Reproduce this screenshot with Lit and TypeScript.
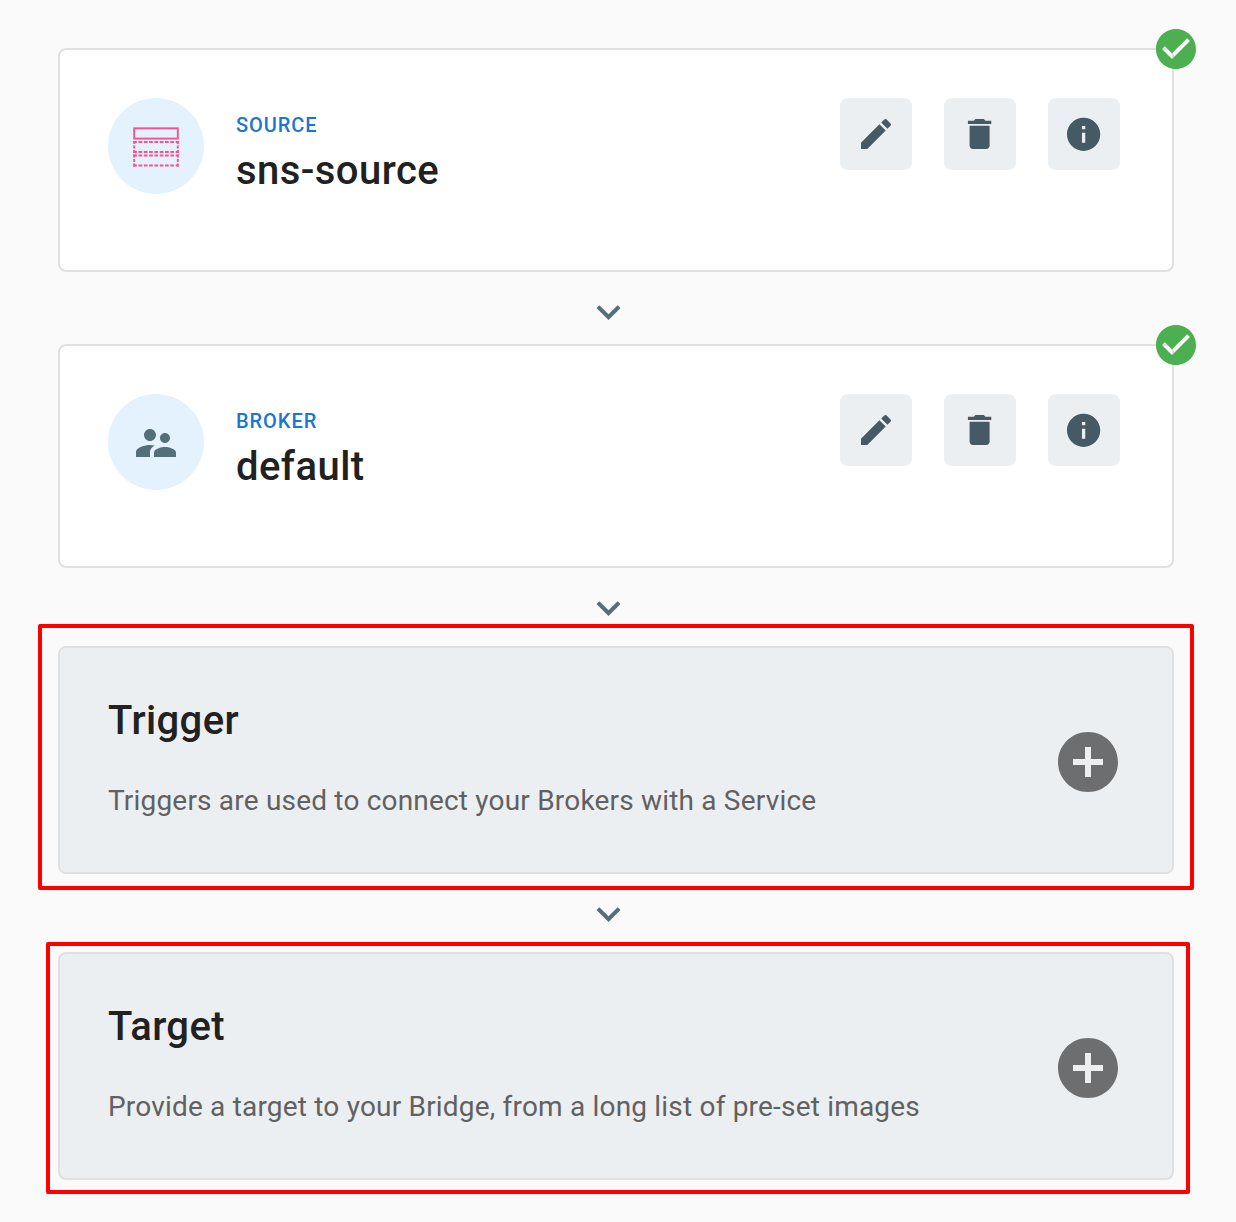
import { LitElement, html, css, svg } from "lit";
import { customElement } from "lit/decorators.js";

const icons = {
  edit: svg`<path d="M3 17.25V21h3.75L17.81 9.94l-3.75-3.75L3 17.25zM20.71 7.04a1 1 0 0 0 0-1.41l-2.34-2.34a1 1 0 0 0-1.41 0l-1.83 1.83 3.75 3.75 1.83-1.83z"/>`,
  trash: svg`<path d="M6 19c0 1.1.9 2 2 2h8c1.1 0 2-.9 2-2V7H6v12zM19 4h-3.5l-1-1h-5l-1 1H5v2h14V4z"/>`,
  info: svg`<path d="M12 2C6.48 2 2 6.48 2 12s4.48 10 10 10 10-4.48 10-10S17.52 2 12 2zm1 15h-2v-6h2v6zm0-8h-2V7h2v2z"/>`,
  check: svg`<path d="M12 2C6.48 2 2 6.48 2 12s4.48 10 10 10 10-4.48 10-10S17.52 2 12 2zm-2 15l-5-5 1.41-1.41L10 14.17l7.59-7.59L19 8l-9 9z"/>`,
  add: svg`<path d="M12 2C6.48 2 2 6.48 2 12s4.48 10 10 10 10-4.48 10-10S17.52 2 12 2zm5 11h-4v4h-2v-4H7v-2h4V7h2v4h4v2z"/>`,
  chevron: svg`<path d="M16.59 8.59L12 13.17 7.41 8.59 6 10l6 6 6-6z"/>`,
  people: svg`<path d="M16.5 12c1.38 0 2.49-1.12 2.49-2.5S17.88 7 16.5 7C15.12 7 14 8.12 14 9.5s1.12 2.5 2.5 2.5zM9 11c1.66 0 2.99-1.34 2.99-3S10.66 5 9 5C7.34 5 6 6.34 6 8s1.34 3 3 3zm7.5 3c-1.83 0-5.5.92-5.5 2.75V19h11v-2.25c0-1.83-3.67-2.75-5.5-2.75zM9 13c-2.33 0-7 1.17-7 3.5V19h7v-2.25c0-.85.33-2.34 2.37-3.47C10.5 13.1 9.66 13 9 13z"/>`,
};
type IconName = keyof typeof icons;

const icon = (name: IconName, cls: string) =>
  html`<svg class="icon ${cls}" viewBox="0 0 24 24" aria-hidden="true">${icons[name]}</svg>`;

const queueIcon = html`<svg class="queue" viewBox="0 0 48 42" aria-hidden="true">
  <rect x="2.2" y="3.3" width="43.6" height="10.3" />
  <path class="dash" d="M1.2 17H46.8M1.2 27H46.8M1.2 30.5H46.8M1.2 40.5H46.8" />
  <path class="side" d="M2.2 16V28M45.8 16V28M2.2 29.5V41.5M45.8 29.5V41.5" />
</svg>`;

@customElement("bridge-node")
class BridgeNode extends LitElement {
  static properties = { kind: {}, name: {} };
  declare kind: string;
  declare name: string;

  static styles = css`
    :host { display: block; }
    .card {
      position: relative;
      box-sizing: border-box;
      height: 224px;
      padding: 48px 52px 0 48px;
      display: flex;
      background: #fff;
      border: 2px solid #e0e0e0;
      border-radius: 8px;
    }
    .icon { display: block; fill: currentColor; }
    .avatar {
      flex: none;
      width: 96px;
      height: 96px;
      display: flex;
      align-items: center;
      justify-content: center;
      border-radius: 50%;
      background: #e3f2fd;
      color: #546e7a;
    }
    .people { width: 48px; height: 48px; margin-top: 2px; }
    .queue {
      width: 48px;
      height: 42px;
      fill: none;
      stroke: #ff4f8b;
      stroke-width: 1.9;
    }
    .dash { stroke-dasharray: 3.7 1.6; }
    .side { stroke-dasharray: 2.9 1.65; }
    .text { flex: 1; margin-left: 32px; padding-top: 13px; }
    .kind {
      font-size: 20px;
      line-height: 28px;
      font-weight: 500;
      letter-spacing: 0.94px;
      text-transform: uppercase;
      color: #1976d2;
    }
    .name {
      margin-top: 8px;
      font-size: 40px;
      line-height: 48px;
      font-weight: 500;
      letter-spacing: 0.45px;
      color: #212121;
    }
    .actions { display: flex; gap: 32px; }
    .action {
      width: 72px;
      height: 72px;
      padding: 0;
      display: flex;
      align-items: center;
      justify-content: center;
      border: 0;
      border-radius: 8px;
      background: #eceff1;
      color: #455a64;
    }
    .glyph { width: 40px; height: 40px; }
    .trash { transform: translateX(-0.4px); }
    .info { transform: translate(-0.4px, 0.3px); }
    .status {
      position: absolute;
      top: -25px;
      right: -28px;
      width: 48px;
      height: 48px;
      color: #4caf50;
    }
  `;

  render() {
    const actions: IconName[] = ["edit", "trash", "info"];
    return html`<section class="card">
      <div class="avatar">${this.kind === "Source" ? queueIcon : icon("people", "people")}</div>
      <div class="text">
        <div class="kind">${this.kind}</div>
        <div class="name">${this.name}</div>
      </div>
      <div class="actions">
        ${actions.map((a) => html`<button class="action">${icon(a, `glyph ${a}`)}</button>`)}
      </div>
      ${icon("check", "status")}
    </section>`;
  }
}

@customElement("bridge-slot")
class BridgeSlot extends LitElement {
  static properties = { heading: {}, text: {}, frame: {} };
  declare heading: string;
  declare text: string;
  declare frame: string;

  static styles = css`
    :host { display: block; }
    .card {
      position: relative;
      box-sizing: border-box;
      height: 228px;
      padding: 0 48px;
      display: flex;
      align-items: center;
      justify-content: space-between;
      background: #eceff1;
      border: 2px solid #e0e0e0;
      border-radius: 8px;
    }
    .body { align-self: flex-start; padding-top: 49px; }
    .heading {
      font-size: 40px;
      line-height: 48px;
      font-weight: 500;
      letter-spacing: 0.4px;
      color: #212121;
    }
    .text {
      margin-top: 36px;
      font-size: 28px;
      line-height: 40px;
      letter-spacing: 0.19px;
      color: #616161;
    }
    .add { width: 72px; height: 72px; display: block; fill: #6d6e70; margin-top: 4px; }
    .frame { position: absolute; border: 4px solid #f00; border-radius: 2px; }
    .wide { top: -24px; right: -22px; bottom: -18px; left: -22px; }
    .snug { top: -12px; right: -18px; bottom: -16px; left: -14px; }
  `;

  render() {
    return html`<section class="card">
      <div class="body">
        <div class="heading">${this.heading}</div>
        <div class="text">${this.text}</div>
      </div>
      ${icon("add", "add")}
      <div class="frame ${this.frame}"></div>
    </section>`;
  }
}

@customElement("app-root")
class AppRoot extends LitElement {
  static styles = css`
    :host {
      display: block;
      box-sizing: border-box;
      height: 1222px;
      padding: 48px 62px 0 58px;
      background: #fafafa;
      font-family: Roboto, "Liberation Sans", sans-serif;
    }
    .link { height: 72px; display: flex; justify-content: center; padding: 16px 15px 0 0; box-sizing: border-box; }
    .tall { height: 78px; }
    .chevron { width: 48px; height: 48px; fill: #546e7a; transform: translateX(-0.5px); }
  `;

  render() {
    return html`
      <bridge-node kind="Source" name="sns-source"></bridge-node>
      <div class="link">${icon("chevron", "chevron")}</div>
      <bridge-node kind="Broker" name="default"></bridge-node>
      <div class="link tall">${icon("chevron", "chevron")}</div>
      <bridge-slot heading="Trigger" text="Triggers are used to connect your Brokers with a Service" frame="wide"></bridge-slot>
      <div class="link tall">${icon("chevron", "chevron")}</div>
      <bridge-slot heading="Target" text="Provide a target to your Bridge, from a long list of pre-set images" frame="snug"></bridge-slot>
    `;
  }
}
